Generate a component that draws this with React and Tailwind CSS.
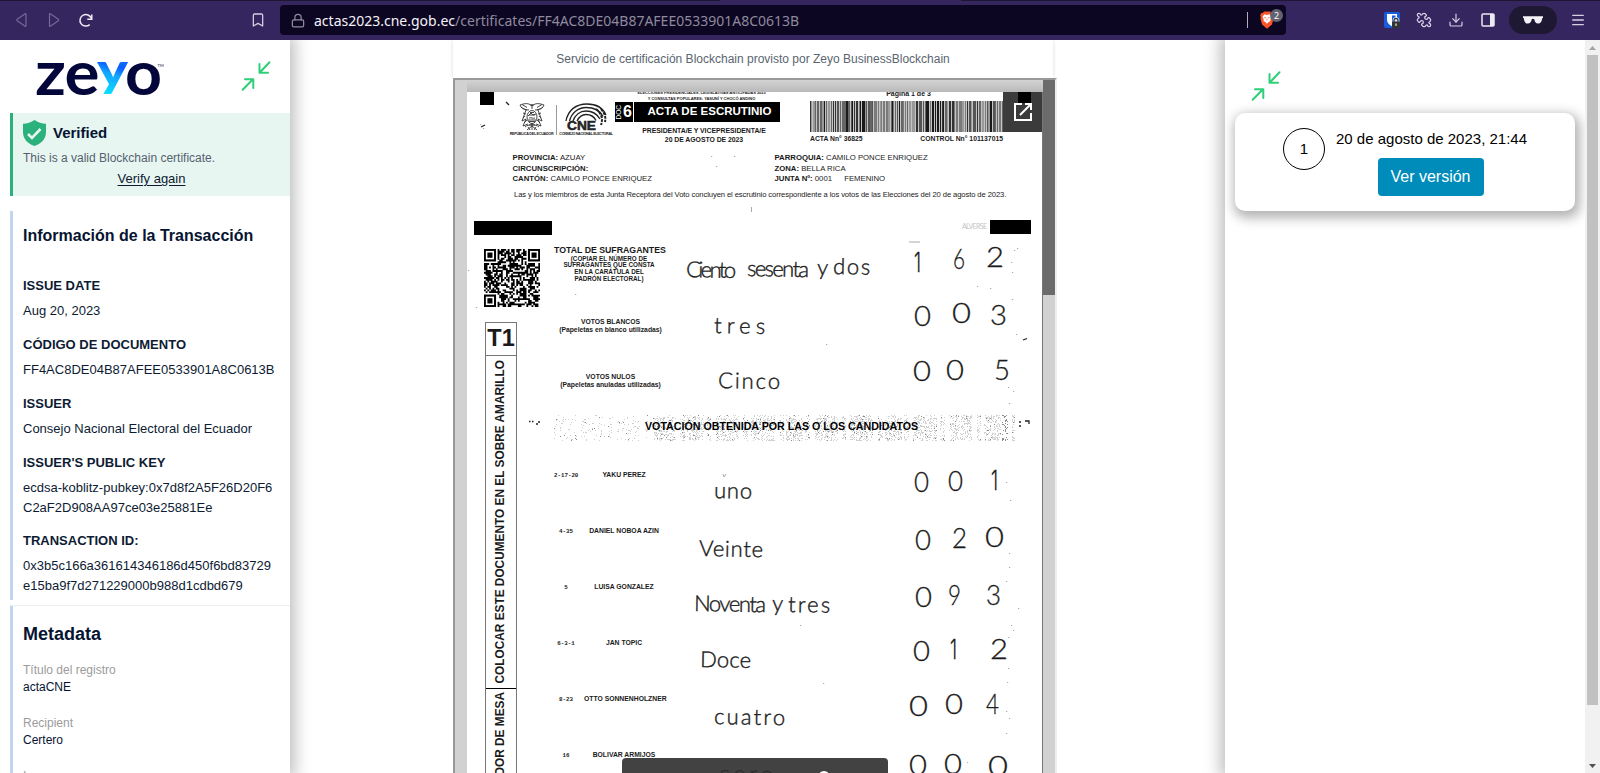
import React from "react";
import { Bookmark, Lock, Puzzle, Download, Menu } from "lucide-react";

function seeded(seed) {
  let s = seed;
  return () => {
    s = (s * 1664525 + 1013904223) % 4294967296;
    return s / 4294967296;
  };
}

/* ---------- browser chrome ---------- */

function BrowserBar() {
  return (
    <header className="relative flex h-10 shrink-0 items-center bg-[#35265f] font-['Noto_Sans',sans-serif]">
      <div className="absolute left-0 top-0 h-px w-[720px] bg-[#1d1733]" />
      <div className="absolute left-[961px] right-0 top-0 h-px bg-[#1d1733]" />
      <svg className="ml-4 h-4 w-3 text-[#74699a]" viewBox="0 0 12 16" fill="none" stroke="currentColor" strokeWidth="1.2" strokeLinejoin="round">
        <path d="M10 2.2v11.6c0 .6-.5.8-.9.4L1.200 8.700a.9.9 0 0 1 0-1.400L9.100 1.800c.4-.4.9-.2.9.4z" />
      </svg>
      <svg className="ml-5 h-4 w-3 text-[#74699a]" viewBox="0 0 12 16" fill="none" stroke="currentColor" strokeWidth="1.2" strokeLinejoin="round">
        <path d="M1.500 2.200v11.600c0 .6.5.8.9.4l7.900-5.500a.9.9 0 0 0 0-1.400L2.400 1.800c-.4-.4-.9-.2-.9.4z" />
      </svg>
      <svg className="ml-[18px] h-4 w-4 text-[#eceaf4]" viewBox="0 0 16 16" fill="none" stroke="currentColor" strokeWidth="1.500">
        <path d="M11.700 12.600A5.800 5.800 0 1 1 13.300 6.500" />
        <path d="M9.300 7.200h4.500V2.600" />
      </svg>
      <Bookmark className="ml-[156px] h-4 w-4 text-[#d5d0e4]" strokeWidth={1.900} />
      <div className="ml-[14px] flex h-[30px] w-[1006px] items-center rounded bg-[#0c0623]">
        <Lock className="ml-[10px] h-[15px] w-4 text-[#8f8b9d]" strokeWidth={2} />
        <p className="ml-2 whitespace-nowrap text-[14px] text-[#8e8a9c]">
          <span className="text-[#f4f3f7]">actas2023.cne.gob.ec</span>/certificates/FF4AC8DE04B87AFEE0533901A8C0613B
        </p>
        <div className="ml-auto h-4 w-px bg-[#b3b0bd]" />
        <div className="relative ml-3 mr-3 h-[18px] w-[14px]">
          <svg viewBox="0 0 14 18" className="h-[18px] w-[14px]">
            <path d="M4 .5h6l1.300 1.500 1.500-.1 1 2.600-.6 1.500.4 1.400-1.700 6-4.900 4.300-4.900-4.300L.4 7.400.8 6 .2 4.500l1-2.600 1.500.1z" fill="#fb542b" />
            <path d="M4.500 3.200 7 3.900l2.500-.7 2 2.300-1.200 3 .2 1.600-1.800.8L7 12.800l-1.700-1.900-1.800-.8.2-1.600-1.200-3z" fill="#fff" />
            <path d="M4.300 6.500l1.900.5M9.700 6.500 7.800 7M7 8v1.500" stroke="#fb542b" strokeWidth=".8" />
          </svg>
          <span className="absolute -top-0.5 left-[10px] flex h-[13px] w-[13px] items-center justify-center rounded-full bg-[#636270] text-[9px] leading-none text-white">2</span>
        </div>
      </div>
      <div className="relative ml-[98px] h-4 w-4">
        <svg viewBox="0 0 16 16" className="h-4 w-4">
          <rect width="16" height="16" rx="2" fill="#175ddc" />
          <path d="M3 2h10v6c0 3-2.500 5-5 6.300C5.500 13 3 11 3 8z" fill="#fff" />
          <path d="M8 3.500h3.500V8c0 2-1.700 3.400-3.500 4.400z" fill="#175ddc" />
          <path d="M10 10V8.500a2 2 0 0 1 4 0V10" fill="none" stroke="#fff" strokeWidth="2.600" />
          <rect x="8" y="9.500" width="8" height="6.500" rx="1" fill="#333" />
          <path d="M10 10V8.500a2 2 0 0 1 4 0V10" fill="none" stroke="#333" strokeWidth="1.300" />
          <rect x="11.300" y="11.500" width="1.400" height="2.300" fill="#ddd" />
        </svg>
      </div>
      <Puzzle className="ml-4 h-4 w-4 -rotate-90 text-[#d5d0e4]" strokeWidth={1.900} />
      <Download className="ml-4 h-4 w-4 text-[#d5d0e4]" strokeWidth={1.800} />
      <svg className="ml-4 h-4 w-4" viewBox="0 0 16 16">
        <rect x="2" y="2" width="12" height="12" rx="1" fill="none" stroke="#ebe9f2" strokeWidth="1.500" />
        <rect x="10" y="2" width="4" height="12" fill="#ebe9f2" />
      </svg>
      <div className="ml-[13px] flex h-7 w-12 items-center justify-center rounded-full bg-[#1e1833]">
        <svg viewBox="0 0 20 8" className="h-2 w-5">
          <path d="M0 .3h20v1.800h-.8C19 5 18 7.600 15.200 7.600c-2.500 0-3.600-2-3.900-4.300-.3-.8-2.300-.8-2.600 0C8.400 5.600 7.300 7.600 4.800 7.600 2 7.600 1 5 .8 2.100H0z" fill="#f4f3f7" />
        </svg>
      </div>
      <Menu className="ml-[13px] h-4 w-4 text-[#d5d0e4]" strokeWidth={1.900} />
    </header>
  );
}

/* ---------- sidebar ---------- */

function ZeyoLogo() {
  return (
    <svg width="126" height="34" viewBox="0 0 126 34" className="overflow-visible font-['Lato',sans-serif]">
      <defs>
        <linearGradient id="zeyoY" x1="0.700" y1="0" x2="0.500" y2="1">
          <stop offset="0" stopColor="#1f8dff" />
          <stop offset="0.450" stopColor="#0a5bff" />
          <stop offset="0.620" stopColor="#12a4ff" />
          <stop offset="1" stopColor="#0be0ff" />
        </linearGradient>
      </defs>
      <g fontWeight="700" fill="#03063a">
        <text x="-2" y="32" fontSize="62" textLength="31" lengthAdjust="spacingAndGlyphs">z</text>
        <text x="27.500" y="32" fontSize="62" textLength="35" lengthAdjust="spacingAndGlyphs">e</text>
        <text x="88" y="32" fontSize="62" textLength="37" lengthAdjust="spacingAndGlyphs">o</text>
        <text x="120.500" y="4" fontSize="4" fill="#55576f">TM</text>
      </g>
      <text x="60" y="23" fontSize="45" fontWeight="900" fill="url(#zeyoY)" textLength="31" lengthAdjust="spacingAndGlyphs">y</text>
    </svg>
  );
}

function CollapseArrows() {
  return (
    <svg width="30" height="32" viewBox="0 0 30 32" fill="none" stroke="#2fcf7a" strokeWidth="2" strokeLinecap="round" strokeLinejoin="round">
      <path d="M28.500 2.300 18.800 12.500M18.500 4v8.700h8.500" />
      <path d="M1.700 29.700 12 19.300M4 19.200h8.300v8.700" />
    </svg>
  );
}

function Field({ label, children, className }) {
  return (
    <div className={className}>
      <h3 className="text-[13px] font-bold leading-[19px]">{label}</h3>
      <p className="mt-1.5 break-all text-[13px] leading-[19.500px]">{children}</p>
    </div>
  );
}

function MetaItem({ label, value }) {
  return (
    <div className="h-[53px] text-xs leading-[17px]">
      <p className="text-[#9b9b9b]">{label}</p>
      <p className="text-[#061431]">{value}</p>
    </div>
  );
}

function Sidebar() {
  return (
    <aside className="z-10 flex w-[290px] shrink-0 flex-col overflow-hidden bg-white pl-2.5 text-[#0d1b33] shadow-[0_0_15px_5px_rgba(0,0,0,0.250)]">
      <div className="flex h-[73px] shrink-0 items-start pl-[27px] pt-[20px]">
        <div className="mt-[3px]"><ZeyoLogo /></div>
        <div className="ml-[78px]"><CollapseArrows /></div>
      </div>
      <section className="h-[83px] shrink-0 border-l-[3px] border-[#2bb17b] bg-[#e8f6f1] pl-2.5 pt-[7px]">
        <div className="flex h-[26px] items-center">
          <svg viewBox="0 0 23 26" className="h-[26px] w-[23px]">
            <path d="M11.500 0C15 2.300 18.500 3.500 23 3.800V12c0 7-4.500 11.500-11.500 14C4.500 23.500 0 19 0 12V3.800C4.500 3.500 8 2.300 11.500 0z" fill="#2bb17b" />
            <path d="m5 14 4 4L17.500 9" fill="none" stroke="#e8f6f1" strokeWidth="2.600" />
          </svg>
          <h2 className="ml-[7px] text-[15px] font-bold text-[#061431]">Verified</h2>
        </div>
        <p className="mt-[3px] text-xs leading-[18px] text-[#55616f]">This is a valid Blockchain certificate.</p>
        <p className="mt-[3px] pr-2.5 text-center text-[13px] leading-[18px] underline underline-offset-2">Verify again</p>
      </section>
      <section className="mt-[15px] h-[389px] shrink-0 border-l-[3px] border-[#c0d5ee] pl-2.5 pr-3 pt-[15px]">
        <h2 className="whitespace-nowrap text-base font-bold leading-5 text-[#061431]">Información de la Transacción</h2>
        <Field className="mt-[30px]" label="ISSUE DATE">Aug 20, 2023</Field>
        <Field className="mt-[14.500px]" label="CÓDIGO DE DOCUMENTO">FF4AC8DE04B87AFEE0533901A8C0613B</Field>
        <Field className="mt-[14.500px]" label="ISSUER">Consejo Nacional Electoral del Ecuador</Field>
        <Field className="mt-[14.500px]" label="ISSUER'S PUBLIC KEY">
          ecdsa-koblitz-pubkey:0x7d8f2A5F26D20F6<br />C2aF2D908AA97ce03e25881Ee
        </Field>
        <Field className="mt-[14.200px]" label="TRANSACTION ID:">
          0x3b5c166a361614346186d450f6bd83729<br />e15ba9f7d271229000b988d1cdbd679
        </Field>
      </section>
      <div className="mt-[5px] h-px shrink-0 bg-[#eeeff1]" />
      <section className="flex-1 border-l-[3px] border-[#c0d5ee] pl-2.5 pt-4">
        <h2 className="text-lg font-bold leading-6 text-[#061431]">Metadata</h2>
        <div className="mt-[16px]">
          <MetaItem label="Título del registro" value="actaCNE" />
          <MetaItem label="Recipient" value="Certero" />
          <MetaItem label="Issuer" value="" />
        </div>
      </section>
    </aside>
  );
}

/* ---------- scanned tally sheet ---------- */

function Emblem() {
  return (
    <svg viewBox="0 0 26 28" className="h-7 w-[26px]" fill="none" stroke="#333" strokeWidth="0.900">
      <path d="M13 3C9-1 4 1 1 2c1 3 3 4 7 5M13 3c4-4 9-2 12-1-1 3-3 4-7 5" />
      <path d="M2 4c2 2 5 3 8 3M24 4c-2 2-5 3-8 3M11 2h4M13 1v5M3 1.500l5 3M23 1.500l-5 3" />
      <ellipse cx="13" cy="14" rx="5" ry="6.500" />
      <path d="M9 13l3-3 2 2 3-1M9 17h8M10 15c2-1 4 1 6 0M10 12h6M11 9.500h4M10 18.500h6" />
      <path d="M7 7 3 18l4-2-3 7 5-2M19 7l4 11-4-2 3 7-5-2M4 10l3 1M22 10l-3 1M6 13l-2 2M20 13l2 2M5 20l3-3M21 20l-3-3" />
      <path d="M6 24c3-3 11-3 14 0M8 27l5-4 5 4M13 20v7M9 24l2 3M17 24l-2 3M10 22h6" />
    </svg>
  );
}

function CneMark() {
  return (
    <svg viewBox="0 0 42 28" className="h-7 w-[42px] overflow-visible" fill="none" stroke="#222" strokeWidth="1.300">
      <path d="M1 18C3 7 11 1 22 1c9 0 16 4 19 11" />
      <path d="M4.500 18C6.500 10 13 4.500 21 4.500c8 0 14 3 17 9" />
      <path d="M8 18c2-6 7-10 13-10 7 0 11 3 14 8" />
      <path d="M12 18c2-4 5-6.500 9-6.500 5 0 8 2 10 6" />
      <path d="M31 6c6 5 7 10 5 16M36 6c4 5 5 8 4 13" strokeWidth="2" strokeDasharray="3 1" />
      <text x="2" y="27" fontSize="12" fontWeight="700" fill="#222" stroke="#222" strokeWidth="0.500" textLength="29" lengthAdjust="spacingAndGlyphs">CNE</text>
    </svg>
  );
}

function Barcode() {
  const rnd = seeded(11);
  const bars = [];
  const shades = ["#1a1a1a", "#333", "#666", "#7a7a7a", "#999", "#555"];
  let x = 0;
  while (x < 193) {
    const w = 1 + Math.floor(rnd() * 2.2);
    bars.push(<rect key={x} x={x} y="0" width={w} height="31" fill={shades[Math.floor(rnd() * 6)]} />);
    x += w + (rnd() > 0.4 ? 1 : 0);
  }
  return <svg viewBox="0 0 193 31" className="h-[31px] w-[193px] bg-[#c4c4c4]">{bars}</svg>;
}

function QrCode() {
  const n = 33;
  const rnd = seeded(77);
  let d = "";
  for (let y = 0; y < n; y++)
    for (let x = 0; x < n; x++) {
      const on = rnd() > 0.46;
      const finder = (x < 8 && y < 8) || (x > n - 9 && y < 8) || (x < 8 && y > n - 9);
      if (on && !finder) d += `M${x} ${y}h1.050v1.050h-1.050z`;
    }
  const eye = (x, y) => (
    <g key={`${x}-${y}`}>
      <rect x={x + 0.5} y={y + 0.5} width="6" height="6" fill="none" stroke="#000" strokeWidth="1.200" />
      <rect x={x + 2} y={y + 2} width="3" height="3" />
    </g>
  );
  return (
    <svg viewBox="0 0 33 33" preserveAspectRatio="none" className="h-[58px] w-14">
      <path d={d} />
      {eye(0, 0)}
      {eye(26, 0)}
      {eye(0, 26)}
    </svg>
  );
}

function NoiseBand() {
  const rnd = seeded(5);
  let light = "";
  let dark = "";
  for (let i = 0; i < 6500; i++) {
    const x = Math.floor(rnd() * 461);
    const y = Math.floor(rnd() * 26);
    const density = x < 100 ? 0.16 : x < 360 ? (y < 3 ? 0.4 : 0.7) : 0.6;
    const stripe = Math.sin(x * 0.7) + Math.sin(x * 0.19) > -0.9;
    if (rnd() > density || !stripe) continue;
    if (rnd() > 0.93 || (x > 446 && x < 455)) dark += `M${x} ${y}h1v1h-1z`;
    else light += `M${x} ${y}h1v1h-1z`;
  }
  return (
    <svg viewBox="0 0 461 26" className="absolute left-0 top-0 h-[26px] w-[461px]">
      <path d={light} fill="#d0d0d0" />
      <path d={dark} fill="#8c8c8c" />
    </svg>
  );
}

const WORDS = [
  ["Ciento", 686, 277, 50], ["sesenta", 747, 276, 62], ["y", 817, 275, 12], ["dos", 833, 274, 37],
  ["tres", 714, 333, 51], ["Cinco", 718, 388, 62], ["uno", 714, 498, 38], ["Veinte", 699, 556, 64],
  ["Noventa", 694, 611, 72], ["y", 772, 611, 12], ["tres", 788, 612, 42],
  ["Doce", 700, 667, 51], ["cuatro", 714, 724, 71], ["cero", 719, 781, 54],
];

const DIGITS = [
  ["1", 914, 272, 7], ["6", 953, 269, 12], ["2", 986, 267, 18],
  ["0", 914, 326, 17], ["0", 952, 323, 19], ["3", 990, 325, 17],
  ["0", 913, 381, 18], ["0", 946, 380, 18], ["5", 994, 380, 16],
  ["0", 914, 492, 15], ["0", 948, 491, 15], ["1", 991, 490, 7],
  ["0", 915, 550, 16], ["2", 952, 548, 15], ["0", 985, 547, 19],
  ["0", 915, 607, 17], ["9", 948, 605, 13], ["3", 986, 605, 15],
  ["0", 913, 661, 17], ["1", 950, 659, 7], ["2", 990, 659, 18],
  ["0", 909, 716, 19], ["0", 945, 714, 18], ["4", 986, 714, 13],
  ["0", 909, 775, 18], ["0", 944, 774, 18], ["0", 988, 776, 20],
];

const SPECKS = [
  [507, 103], [483, 128], [480, 124], [711, 156], [734, 156], [716, 166], [575, 294], [826, 344],
  [1014, 250], [1011, 262], [1012, 272], [1017, 248], [977, 286], [990, 288], [1012, 299], [1016, 334],
  [1008, 387], [1013, 391], [1009, 403], [1006, 482], [1010, 500], [1009, 553], [1009, 567], [1006, 581],
  [1018, 608], [1011, 625], [1013, 630], [1008, 637], [800, 625], [823, 683], [1008, 668], [1007, 682],
  [1006, 711], [1009, 718], [1006, 733], [967, 762], [476, 307], [468, 270],
];

/* Pen strokes and scanner specks lie over the printed form. */
function InkLayer() {
  return (
    <svg viewBox="467 92 576 681" className="pointer-events-none absolute left-0 top-0 h-[681px] w-[576px] font-['Lato',sans-serif]" fill="#1b1b1b">
      <g fontSize="22" fontWeight="300" stroke="#1b1b1b" strokeWidth="0.400">
        {WORDS.map(([t, x, y, w]) => (
          <text key={`${t}${y}`} x={x} y={y} textLength={w} lengthAdjust="spacing" transform={`rotate(1 ${x} ${y})`}>{t}</text>
        ))}
      </g>
      <g fontSize="27" fontWeight="300" stroke="#1b1b1b" strokeWidth="0.300">
        {DIGITS.map(([t, x, y, w]) => (
          <text
            key={`${x}-${y}`}
            x={x}
            y={y}
            textLength={w}
            lengthAdjust="spacingAndGlyphs"
            className={t === "1" ? "font-['Inter',sans-serif]" : ""}
          >
            {t}
          </text>
        ))}
      </g>
      {SPECKS.map(([x, y]) => <rect key={`${x}${y}`} x={x} y={y} width="1.200" height="1" fill="#aaa" />)}
      <path d="M529 421.500h1.500M532 421.500h1.500M536 424h2M538 422h2M1023 340l4-1.500M1019 422h2M1019 426h2M1025 421h4v3M506 102l3 3M481 127l4-2" stroke="#222" strokeWidth="1.300" fill="none" />
      <path d="M751.500 207v5M909 242h11M723 474l1 3 2-3" stroke="#aaa" fill="none" />
      <text x="962" y="229" fontSize="7" fill="#c4c4c4" textLength="25">ALVERSE</text>
    </svg>
  );
}

function Candidate({ code, name }) {
  return (
    <div className="flex h-14 items-center">
      <span className="w-6 whitespace-nowrap text-center font-['Liberation_Mono',monospace] text-[5.800px] font-bold leading-none">{code}</span>
      <span className="ml-[6px] w-[80px] whitespace-nowrap text-center text-[6.800px] font-bold leading-none">{name}</span>
    </div>
  );
}

function TallySheet() {
  return (
    <article className="relative ml-3 flex h-[681px] w-[576px] flex-col overflow-hidden border-r border-[#777] bg-white text-[#1a1a1a]">
      <div className="flex h-[61px] shrink-0 items-start">
        <div className="ml-[13px] h-[13px] w-[14px] bg-black" />
        <div className="ml-4 flex w-[43px] flex-col items-center pt-[11px]">
          <Emblem />
          <span className="mt-px whitespace-nowrap text-[3.700px] font-bold leading-[5px] tracking-[-0.270px]">REPÚBLICA DEL ECUADOR</span>
        </div>
        <div className="ml-[3px] mt-[13px] h-[30px] w-px bg-[#999]" />
        <div className="ml-[3px] flex w-[52px] flex-col items-center pt-[11px]">
          <CneMark />
          <span className="mt-px whitespace-nowrap text-[3.700px] font-bold leading-[5px] tracking-[-0.330px]">CONSEJO NACIONAL ELECTORAL</span>
        </div>
        <div className="ml-[3px] w-[165px]">
          <div className="-mt-[2px] flex h-3 flex-col items-center pl-2 text-[4px] font-bold leading-[5.500px]">
            <span className="whitespace-nowrap tracking-[-0.050px]">ELECCIONES PRESIDENCIALES, LEGISLATIVAS ANTICIPADAS 2023</span>
            <span className="whitespace-nowrap">Y CONSULTAS POPULARES: YASUNÍ Y CHOCÓ ANDINO</span>
          </div>
          <div className="flex h-5 items-center text-white">
            <div className="flex h-5 w-[18px] items-center bg-black">
              <span className="w-2 rotate-180 text-[6.500px] leading-[8px] [writing-mode:vertical-rl]">DOC</span>
              <span className="text-[16px] font-bold leading-none">6</span>
            </div>
            <div className="ml-px flex h-5 flex-1 items-center justify-center whitespace-nowrap bg-black pl-[5px] text-[11.500px] font-bold leading-none">ACTA DE ESCRUTINIO</div>
          </div>
          <p className="mt-[4px] whitespace-nowrap pl-[13px] text-center text-[6.900px] font-bold leading-[9px] tracking-[-0.050px]">
            PRESIDENTA/E Y VICEPRESIDENTA/E<br />20 DE AGOSTO DE 2023
          </p>
        </div>
        <div className="ml-[30px] w-[193px]">
          <p className="-mt-[3px] h-3 pl-1 text-center text-[7px] font-bold leading-[9px]">Página 1 de 3</p>
          <Barcode />
          <div className="mt-[2px] flex justify-between whitespace-nowrap text-[6.800px] font-bold leading-[9px]">
            <span>ACTA Nn° 36825</span>
            <span>CONTROL Nn° 101137015</span>
          </div>
        </div>
      </div>
      <div className="flex shrink-0 pl-[45.500px] text-[7.750px] leading-[10.500px]">
        <div className="w-[262px]">
          <p><b>PROVINCIA:</b> AZUAY</p>
          <p><b>CIRCUNSCRIPCIÓN:</b></p>
          <p><b>CANTÓN:</b> CAMILO PONCE ENRIQUEZ</p>
        </div>
        <div>
          <p><b>PARROQUIA:</b> CAMILO PONCE ENRIQUEZ</p>
          <p><b>ZONA:</b> BELLA RICA</p>
          <p><b>JUNTA Nº:</b> 0001 <span className="ml-2.5">FEMENINO</span></p>
        </div>
      </div>
      <p className="mt-[5px] shrink-0 whitespace-nowrap pl-[47px] text-[7.640px] leading-[10px] tracking-[-0.100px]">
        Las y los miembros de esta Junta Receptora del Voto concluyen el escrutinio correspondiente a los votos de las Elecciones del 20 de agosto de 2023.
      </p>
      <div className="mt-[20px] flex shrink-0 justify-between pl-[7px] pr-[11px]">
        <div className="mt-[1.500px] h-[14px] w-[78px] bg-black" />
        <div className="h-[14px] w-[41px] bg-black" />
      </div>
      <div className="mt-[7.500px] flex flex-1">
        <div className="w-[87px] shrink-0 pl-[17px] pt-1.5">
          <QrCode />
          <div className="ml-px mt-[15px] w-8 border-x border-t border-[#777]">
            <div className="flex h-[33px] items-center justify-center border-b border-[#777] text-[23.500px] font-bold leading-none">T1</div>
            <div className="flex h-[333px] items-center justify-center border-b border-black">
              <span className="rotate-180 whitespace-nowrap text-[11.850px] font-bold leading-none [writing-mode:vertical-rl]">COLOCAR ESTE DOCUMENTO EN EL SOBRE AMARILLO</span>
            </div>
            <div className="flex h-[100px] items-start justify-center pt-[3px]">
              <span className="rotate-180 whitespace-nowrap text-[11.850px] font-bold leading-none [writing-mode:vertical-rl]">PROCESADOR DE MESA</span>
            </div>
          </div>
        </div>
        <div className="flex-1">
          <div className="h-[75px] w-[110px] whitespace-nowrap pt-[2px] text-center text-[6.300px] font-bold leading-[6.800px]">
            <h4 className="text-[8.750px] leading-[11px]">TOTAL DE SUFRAGANTES</h4>
            (COPIAR EL NÚMERO DE<br />SUFRAGANTES QUE CONSTA<br />EN LA CARÁTULA DEL<br />PADRÓN ELECTORAL)
          </div>
          <div className="h-[55px] w-[113px] whitespace-nowrap text-center text-[6.800px] font-bold leading-[8px]">
            VOTOS BLANCOS<br />(Papeletas en blanco utilizadas)
          </div>
          <div className="h-[42px] w-[113px] whitespace-nowrap text-center text-[6.800px] font-bold leading-[8px]">
            VOTOS NULOS<br />(Papeletas anuladas utilizadas)
          </div>
          <div className="relative mb-[7px] flex h-[26px] items-center pl-[91px]">
            <NoiseBand />
            <h4 className="relative mt-[-3px] whitespace-nowrap text-[10.660px] font-bold leading-none text-black">VOTACIÓN OBTENIDA POR LAS O LOS CANDIDATOS</h4>
          </div>
          <Candidate code="2-17-20" name="YAKU PEREZ" />
          <Candidate code="4-35" name="DANIEL NOBOA AZIN" />
          <Candidate code="5" name="LUISA GONZALEZ" />
          <Candidate code="6-3-1" name="JAN TOPIC" />
          <Candidate code="8-23" name="OTTO SONNENHOLZNER" />
          <Candidate code="16" name="BOLIVAR ARMIJOS" />
        </div>
      </div>
      <InkLayer />
      <button className="absolute right-[-1px] top-0 flex h-10 w-10 items-center justify-center bg-[#3b3b3b]">
        <span className="absolute left-[15px] top-0 h-[11px] w-[13px] bg-black" />
        <svg viewBox="0 0 18 18" className="relative h-[18px] w-[18px]" fill="none" stroke="#fff" strokeWidth="2">
          <path d="M8 1H1v16h16v-7M11 1h6v6M17 1 6 12" />
        </svg>
      </button>
      <div className="absolute bottom-0 left-[155px] h-[15px] w-[266px] overflow-hidden rounded-t-sm bg-[#2e2e2e]/90">
        <div className="absolute left-[196px] top-[13px] h-3 w-3 rounded-full bg-white" />
      </div>
    </article>
  );
}

function Viewer() {
  return (
    <main className="flex flex-1 flex-col overflow-hidden bg-white pl-[163px]">
      <div className="flex h-[38px] w-[600px] shrink-0 items-center justify-center text-xs text-[#5a6570] shadow-[0_0_4px_rgba(0,0,0,0.150)]">
        Servicio de certificación Blockchain provisto por Zeyo BusinessBlockchain
      </div>
      <div className="flex w-[604px] flex-1 overflow-hidden border-l-2 border-r-2 border-t-2 border-l-[#999] border-r-[#eee] border-t-[#999] bg-[#d1d1d1]">
        <div className="w-[588px]">
          <div className="ml-3 h-3 bg-gradient-to-b from-[#d3d3d3] to-[#b9b9b9]" />
          <TallySheet />
        </div>
        <div className="w-3 bg-[#d1d1d1]">
          <div className="h-[215px] bg-[#6b6b6b]" />
        </div>
      </div>
    </main>
  );
}

/* ---------- versions ---------- */

function VersionsPanel() {
  return (
    <aside className="z-10 flex w-[360px] shrink-0 flex-col bg-white shadow-[0_0_15px_5px_rgba(0,0,0,0.250)]">
      <div className="h-[73px] pl-[26px] pt-[30px]"><CollapseArrows /></div>
      <div className="mx-2.5 flex h-[98px] rounded-[10px] bg-white pl-12 pt-[15px] text-black shadow-[2px_4px_12px_3px_rgba(0,0,0,0.300)]">
        <div className="flex h-[42px] w-[42px] items-center justify-center rounded-full border border-black text-[15px]">1</div>
        <div className="ml-[11px] flex flex-col items-center">
          <p className="whitespace-nowrap text-[15px] leading-[22px]">20 de agosto de 2023, 21:44</p>
          <button className="mr-0.5 mt-2 h-[38px] w-[106px] rounded bg-[#008cba] text-base text-white">Ver versión</button>
        </div>
      </div>
    </aside>
  );
}

function Scrollbar() {
  return (
    <div className="z-20 flex w-[15px] shrink-0 flex-col items-center bg-[#f1f1f1]">
      <svg viewBox="0 0 15 15" className="h-[15px] w-[15px]"><path d="M4 10h7L7.500 6z" fill="#a3a3a3" /></svg>
      <div className="h-[650px] w-[11px] bg-[#c1c1c1]" />
      <svg viewBox="0 0 15 15" className="mt-auto h-[15px] w-[15px]"><path d="M4 6h7l-3.500 4z" fill="#505050" /></svg>
    </div>
  );
}

export default function App() {
  return (
    <div className="flex h-[773px] w-[1600px] flex-col overflow-hidden bg-white font-['Liberation_Sans',Arial,sans-serif]">
      <BrowserBar />
      <div className="flex flex-1 overflow-hidden">
        <Sidebar />
        <Viewer />
        <VersionsPanel />
        <Scrollbar />
      </div>
    </div>
  );
}
